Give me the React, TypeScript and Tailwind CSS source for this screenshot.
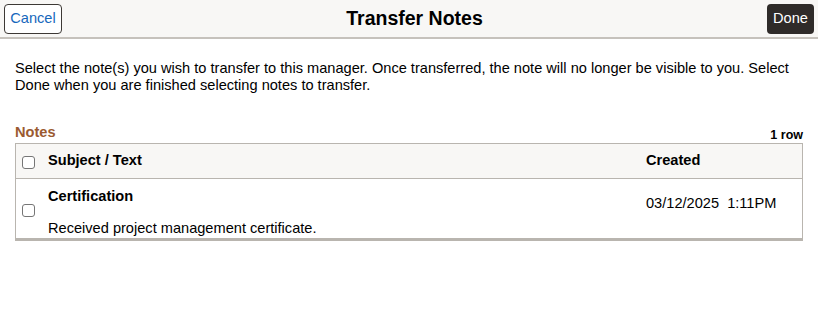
import React from 'react';

/**
 * Checkbox drawn as a plain rounded square, matching the reference look.
 */
function Box() {
  return (
    <span className="block w-[13px] h-[13px] rounded-[3px] border border-[#767676] bg-white" />
  );
}

export default function App() {
  return (
    <div
      className="w-[818px] h-[312px] bg-white text-[#000] overflow-hidden text-[14.6px]"
      style={{ fontFamily: '"Liberation Sans", Arial, sans-serif' }}
    >
      {/* Header bar */}
      <header className="h-[39px] bg-[#f8f7f5] border-b-2 border-[#c6c2bc] flex items-center justify-between pl-[4px] pr-[4px]">
        <button
          type="button"
          className="h-[30px] w-[58px] bg-white border border-[#3d3935] rounded-[4px] text-[#1668bc] text-[14.6px] leading-none"
        >
          Cancel
        </button>
        <h1 className="text-[19.5px] font-bold text-[#000] leading-none">Transfer Notes</h1>
        <button
          type="button"
          className="h-[30px] w-[47px] bg-[#2f2b29] rounded-[4px] text-white text-[14.6px] leading-none"
        >
          Done
        </button>
      </header>

      {/* Instructions */}
      <p className="px-[15px] pt-[21px] leading-[17px] pr-[20px]">
        Select the note(s) you wish to transfer to this manager. Once transferred, the note will no longer be visible to you. Select Done when you are finished selecting notes to transfer.
      </p>

      {/* Notes grid */}
      <section className="px-[15px] pt-[30px]">
        <div className="flex items-end justify-between h-[16px]">
          <h2 className="font-bold text-[#9b5a30] leading-[16px]">Notes</h2>
          <span className="text-[12.5px] font-bold leading-[12px] mb-[-1px]">1 row</span>
        </div>
        <div className="mt-[3px] border border-[#b9b5af] border-b-[3px]">
          <div className="h-[35px] bg-[#f8f7f5] border-b border-[#b9b5af] flex items-center">
            <div className="w-[32px] flex pl-[6px] pt-[2px]">
              <Box />
            </div>
            <div className="flex-1 font-bold">Subject / Text</div>
            <div className="w-[156px] font-bold">Created</div>
          </div>
          <div className="h-[59px] flex items-center">
            <div className="w-[32px] flex pl-[6px] pt-[4px]">
              <Box />
            </div>
            <div className="flex-1 flex flex-col justify-between h-full pt-[9px] pb-[2px]">
              <div className="font-bold leading-[16px]">Certification</div>
              <div className="leading-[16px]">Received project management certificate.</div>
            </div>
            <div className="w-[156px] pb-[10px]">03/12/2025&nbsp;&nbsp;1:11PM</div>
          </div>
        </div>
      </section>
    </div>
  );
}
